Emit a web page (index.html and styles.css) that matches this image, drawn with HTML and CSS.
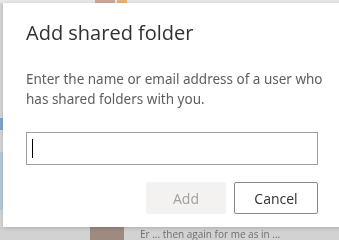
FILE: index.html
```html
<!DOCTYPE html>
<html>
<head>
<meta charset="utf-8">
<link rel="stylesheet" href="styles.css">
</head>
<body>
<div class="page">
  <div class="topbar">
    <span class="gap-a"></span><span class="photo"></span><span class="badge"></span>
  </div>
  <div class="middle">
    <div class="leftrail">
      <span class="rail-a"></span><span class="rail-b"></span><span class="rail-c"></span>
    </div>
  </div>
  <div class="bottombar">
    <span class="gap-b"></span><span class="photo2"></span><span class="line">Er ... then again for me as in ...</span>
  </div>
</div>
<div class="dialog" role="dialog">
  <h1 class="title">Add shared folder</h1>
  <p class="desc">Enter the name or email address of a user who has shared folders with you.</p>
  <div class="field"><span class="caret"></span></div>
  <div class="actions">
    <button class="btn btn-add" disabled>Add</button>
    <button class="btn btn-cancel">Cancel</button>
  </div>
</div>
</body>
</html>
```
FILE: styles.css
```css
html, body {
  margin: 0;
  padding: 0;
}
body {
  width: 339px;
  height: 240px;
  overflow: hidden;
  background: #e4e4e4;
  font-family: "Open Sans", "Noto Sans", sans-serif;
}
.page {
  display: flex;
  flex-direction: column;
  height: 240px;
}
.topbar {
  display: flex;
  height: 3px;
  overflow: hidden;
  background: #e8e8e8;
}
.topbar span { height: 3px; }
.gap-a { width: 95px; }
.photo { width: 20px; background: #cfa89c; }
.badge { width: 10px; background: #f0b070; margin-left: 2px; }
.middle { flex: 1; display: flex; }
.leftrail {
  width: 3px;
  display: flex;
  flex-direction: column;
  background: #d6d6d6;
}
.rail-a { height: 115px; flex-shrink: 0; }
.rail-b { height: 12px; flex-shrink: 0; background: #7fa6cc; }
.rail-c { height: 58px; flex-shrink: 0; margin-top: 22px; background: #b8cadb; }
.bottombar {
  height: 13px;
  display: flex;
  align-items: flex-start;
  background: #d2d2d2;
  overflow: hidden;
}
.gap-b { width: 90px; }
.photo2 { width: 34px; height: 13px; background: #9d8a80; }
.line {
  margin-left: 16px;
  margin-top: 2px;
  font-size: 10px;
  line-height: 10px;
  color: #6f6f6f;
  filter: blur(0.6px);
  white-space: nowrap;
}
.dialog {
  position: fixed;
  left: 3px;
  top: 3px;
  width: 360px;
  height: 224px;
  box-sizing: border-box;
  padding: 16px 0 0 23px;
  background: #fff;
  box-shadow: 0 1px 4px rgba(0, 0, 0, 0.18);
}
.title {
  margin: 0;
  font-size: 20px;
  line-height: 28px;
  font-weight: 400;
  color: #323130;
}
.desc {
  margin: 22px 0 0;
  width: 300px;
  font-family: "Noto Sans", "Open Sans", sans-serif;
  font-size: 13.5px;
  line-height: 20px;
  color: #605e5c;
}
.field {
  margin-top: 23px;
  width: 292px;
  height: 33px;
  box-sizing: border-box;
  border: 1px solid #a19f9d;
  display: flex;
  align-items: center;
  padding-left: 5px;
}
.caret {
  width: 1px;
  height: 19px;
  background: #000;
}
.actions {
  margin-top: 17px;
  width: 292px;
  display: flex;
  justify-content: flex-end;
  gap: 8px;
}
.btn {
  height: 32px;
  box-sizing: border-box;
  font-family: inherit;
  font-size: 14px;
  border-radius: 2px;
  padding: 0;
}
.btn-add {
  width: 80px;
  border: 1px solid #f3f2f1;
  background: #f3f2f1;
  color: #a19f9d;
}
.btn-cancel {
  width: 84px;
  border: 1px solid #8a8886;
  background: #fff;
  color: #323130;
}
```
